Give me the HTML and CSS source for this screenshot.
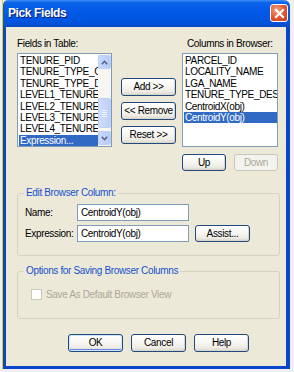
FILE: index.html
```html
<!DOCTYPE html>
<html>
<head>
<meta charset="utf-8">
<link rel="stylesheet" href="styles.css">
</head>
<body>
<div class="window">
  <div class="titlebar">
    <span class="title">Pick Fields</span>
    <span class="close"><svg width="11" height="11" viewBox="0 0 11 11"><path d="M2 2 L9 9 M9 2 L2 9" stroke="#fff" stroke-width="2.2" stroke-linecap="square"/></svg></span>
  </div>
  <div class="frame">
    <div class="client">
      <div class="top">
        <div class="col-left">
          <div class="lbl">Fields in Table:</div>
          <div class="list">
            <div class="items">
              <div class="item">TENURE_PID</div>
              <div class="item">TENURE_TYPE_C</div>
              <div class="item">TENURE_TYPE_D</div>
              <div class="item">LEVEL1_TENURE_</div>
              <div class="item">LEVEL2_TENURE_</div>
              <div class="item">LEVEL3_TENURE_</div>
              <div class="item">LEVEL4_TENURE_</div>
              <div class="item sel">Expression...</div>
            </div>
            <div class="scroll">
              <div class="arrow"><svg width="7" height="5" viewBox="0 0 7 5"><path d="M0.8 4.2 L3.5 1.3 L6.2 4.2" fill="none" stroke="#4D6185" stroke-width="1.5"/></svg></div>
              <div class="track">
                <div class="thumb"><span></span><span></span><span></span><span></span></div>
              </div>
              <div class="arrow"><svg width="7" height="5" viewBox="0 0 7 5"><path d="M0.8 0.8 L3.5 3.7 L6.2 0.8" fill="none" stroke="#4D6185" stroke-width="1.5"/></svg></div>
            </div>
          </div>
        </div>
        <div class="col-mid">
          <button class="btn">Add &gt;&gt;</button>
          <button class="btn">&lt;&lt; Remove</button>
          <button class="btn">Reset &gt;&gt;</button>
        </div>
        <div class="col-right">
          <div class="lbl center">Columns in Browser:</div>
          <div class="list">
            <div class="items">
              <div class="item">PARCEL_ID</div>
              <div class="item">LOCALITY_NAME</div>
              <div class="item">LGA_NAME</div>
              <div class="item">TENURE_TYPE_DES</div>
              <div class="item">CentroidX(obj)</div>
              <div class="item sel">CentroidY(obj)</div>
            </div>
          </div>
          <div class="updown">
            <button class="btn small">Up</button>
            <button class="btn small disabled">Down</button>
          </div>
        </div>
      </div>

      <div class="group g1">
        <span class="legend">Edit Browser Column:</span>
        <div class="frow">
          <span class="flabel">Name:</span>
          <div class="input">CentroidY(obj)</div>
        </div>
        <div class="frow">
          <span class="flabel">Expression:</span>
          <div class="input">CentroidY(obj)</div>
          <button class="btn assist">Assist...</button>
        </div>
      </div>

      <div class="group g2">
        <span class="legend">Options for Saving Browser Columns</span>
        <div class="check">
          <span class="box"></span>
          <span class="clabel">Save As Default Browser View</span>
        </div>
      </div>

      <div class="footer">
        <button class="btn foot default">OK</button>
        <button class="btn foot">Cancel</button>
        <button class="btn foot">Help</button>
      </div>
    </div>
  </div>
</div>
</body>
</html>
```

FILE: styles.css
```css
* { box-sizing: border-box; }
html, body { margin: 0; padding: 0; }
body {
  width: 294px;
  height: 372px;
  background: #EFEFEF;
  font-family: "Liberation Sans", Arial, sans-serif;
  font-size: 10px;
  letter-spacing: -0.35px;
  color: #000;
  overflow: hidden;
}
.window {
  margin-left: 2px;
  width: 288px;
  height: 369px;
  border-left: 1px solid #E4D400;
  display: flex;
  flex-direction: column;
}
.titlebar {
  height: 27px;
  flex: none;
  background: linear-gradient(#3D8EF5 0%, #0B62EA 10%, #0058E6 45%, #0155DF 80%, #0A4CC6 100%);
  border-radius: 5px 6px 0 0;
  display: flex;
  align-items: center;
  justify-content: space-between;
  padding: 0 2px 1px 5px;
}
.title {
  color: #fff;
  font-weight: bold;
  font-size: 12px;
  letter-spacing: -0.4px;
  text-shadow: 1px 1px 0 #0A1874;
}
.close {
  width: 18px;
  height: 18px;
  border: 1px solid #fff;
  border-radius: 3px;
  background: radial-gradient(circle at 35% 30%, #F2A486 0%, #E3582F 50%, #C63A1B 100%);
  display: flex;
  align-items: center;
  justify-content: center;
}
.frame {
  flex: 1;
  background: #0845CC;
  padding: 0 4px 3px 3px;
  display: flex;
}
.client {
  flex: 1;
  background: #ECE9D8;
  padding: 10px 0 0 11px;
  display: flex;
  flex-direction: column;
}
.top { display: flex; }
.lbl {
  height: 16px;
  line-height: 13px;
  white-space: nowrap;
}
.lbl.center { padding-left: 5px; }
.col-left { width: 95px; }
.col-mid {
  width: 55px;
  margin-left: 9px;
  padding-top: 41px;
  display: flex;
  flex-direction: column;
  gap: 6px;
}
.col-right {
  width: 96px;
  margin-left: 6px;
}
.list {
  height: 94px;
  border: 1px solid #7F9DB9;
  background: #fff;
  display: flex;
}
.items {
  flex: 1;
  min-width: 0;
  padding: 1px 0 0 1px;
  overflow: hidden;
}
.item {
  height: 11.4px;
  line-height: 11.4px;
  padding-left: 1px;
  white-space: nowrap;
  overflow: hidden;
}
.item.sel {
  background: #316AC5;
  color: #fff;
}
.scroll {
  width: 13px;
  flex: none;
  display: flex;
  flex-direction: column;
  background: #F7F6F2;
  padding: 1px 0;
}
.arrow {
  height: 14px;
  flex: none;
  border: 1px solid #BCD0F7;
  border-radius: 2px;
  background: linear-gradient(90deg, #CAD9FC, #B6CAF7);
  display: flex;
  align-items: center;
  justify-content: center;
}
.track {
  flex: 1;
  display: flex;
  flex-direction: column;
  justify-content: flex-end;
  padding-bottom: 3px;
}
.thumb {
  height: 30px;
  border: 1px solid #BCD0F7;
  border-radius: 2px;
  background: linear-gradient(90deg, #CFDDFC, #BDD0F8);
  display: flex;
  flex-direction: column;
  align-items: center;
  justify-content: center;
  gap: 1px;
}
.thumb span {
  width: 5px;
  height: 1px;
  background: #EEF4FE;
}
.btn {
  font-family: inherit;
  font-size: 10px;
  letter-spacing: -0.35px;
  white-space: nowrap;
  color: #000;
  height: 18px;
  padding: 0;
  border: 1px solid #20497E;
  border-radius: 3px;
  background: linear-gradient(#FFFFFF 0%, #F7F6F2 45%, #EDEBE4 80%, #D9D4C9 100%);
  box-shadow: inset -1px -1px 0 #DAD5CA;
  line-height: 14px;
}
.col-mid .btn { width: 55px; }
.updown {
  margin-top: 7px;
  display: flex;
  justify-content: space-between;
}
.btn.small { width: 44px; height: 17px; }
.btn.disabled {
  color: #ACA899;
  border-color: #C9C7BA;
  background: #F4F3EE;
  box-shadow: none;
}
.group {
  position: relative;
  border: 1px solid #D5D2C2;
  border-radius: 3px;
  width: 263px;
}
.legend {
  position: absolute;
  top: -7px;
  left: 6px;
  padding: 0 2px;
  background: #ECE9D8;
  color: #1650D0;
  line-height: 12px;
  white-space: nowrap;
}
.g1 {
  margin-top: 22px;
  height: 63px;
  padding: 10px 0 0 7px;
}
.frow {
  display: flex;
  align-items: center;
  height: 17px;
  margin-bottom: 4px;
}
.flabel { width: 52px; }
.input {
  width: 112px;
  height: 17px;
  border: 1px solid #7F9DB9;
  background: #fff;
  padding-left: 3px;
  line-height: 15px;
}
.btn.assist {
  width: 55px;
  height: 17px;
  margin-left: 6px;
}
.g2 {
  margin-top: 15px;
  height: 48px;
  padding: 17px 0 0 13px;
}
.check {
  display: flex;
  align-items: center;
  gap: 4px;
}
.box {
  width: 11px;
  height: 11px;
  border: 1px solid #CAC8BB;
  background: #fff;
}
.clabel { color: #ACA899; }
.footer {
  margin-top: 15px;
  display: flex;
  gap: 8px;
  padding-left: 51px;
}
.btn.foot { width: 55px; }
.btn.default {
  box-shadow: inset 0 0 0 1px #CEE7FF, inset 0 -1px 0 1px #6982EE;
}
```
